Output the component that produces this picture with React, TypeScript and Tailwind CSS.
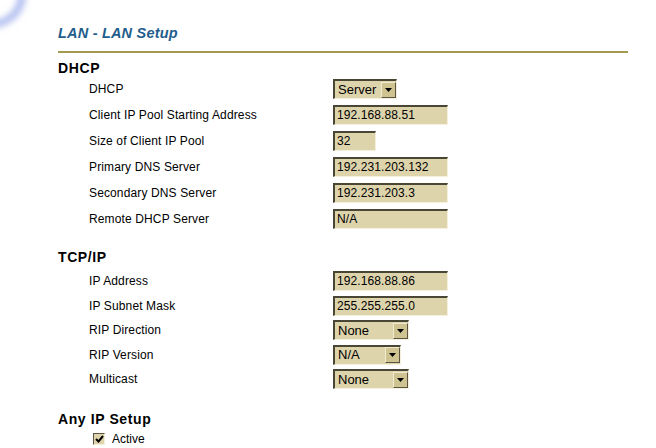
import React from "react";

const font = { fontFamily: '"Liberation Sans", Arial, sans-serif' };

function TextBox({ value, w }: { value: string; w: number }) {
  return (
    <div
      className="h-[20px] border-t-2 border-l-2 border-t-[#4a4636] border-l-[#4a4636] border-b border-r border-b-[#f4f0dc] border-r-[#f4f0dc] bg-[#ddd4ac] pl-[2px] text-[12px] leading-[17px] tracking-[0.1px] text-black"
      style={{ width: w }}
    >
      {value}
    </div>
  );
}

function Select({ value, w }: { value: string; w: number }) {
  return (
    <div
      className="flex h-[20px] items-center justify-between border-t-2 border-l-2 border-t-[#4a4636] border-l-[#4a4636] border-b border-r border-b-[#f4f0dc] border-r-[#f4f0dc] bg-[#ddd4ac] pl-[3px] text-[13px] leading-[16px] text-black"
      style={{ width: w }}
    >
      <span>{value}</span>
      <div className="flex h-[16px] w-[15px] items-center justify-center border-t border-l border-t-[#f0ead0] border-l-[#f0ead0] border-b border-r border-b-[#5a5440] border-r-[#5a5440] bg-[#cfc392]">
        <svg width="7" height="4" viewBox="0 0 7 4">
          <polygon points="0,0 7,0 3.5,4" fill="#000" />
        </svg>
      </div>
    </div>
  );
}

function Row({ label, h, children }: { label: string; h: string; children: React.ReactNode }) {
  return (
    <div className={`flex items-center ${h}`}>
      <div className="w-[275px] pl-[31px] text-[12px] tracking-[0.13px] text-black">{label}</div>
      {children}
    </div>
  );
}

function Header({ h, children }: { h: string; children: React.ReactNode }) {
  return (
    <div className={`flex items-end ${h} text-[14px] font-bold leading-[16px] tracking-[0.6px] text-black`}>
      {children}
    </div>
  );
}

export default function App() {
  return (
    <div className="relative h-[448px] w-[656px] overflow-hidden bg-white" style={font}>
      <svg className="absolute left-0 top-0" width="60" height="60" viewBox="0 0 60 60">
        <defs>
          <filter id="b" x="-50%" y="-50%" width="200%" height="200%">
            <feGaussianBlur stdDeviation="3" />
          </filter>
        </defs>
        <circle cx="-8" cy="-6" r="30" fill="none" stroke="#b4c0f0" strokeWidth="8" filter="url(#b)" />
      </svg>
      <div className="pl-[58px] pr-[28px]">
        <div className="flex h-[44px] items-end pb-[3px]">
          <span className="text-[14.5px] font-bold italic leading-[16px] tracking-[0.2px] text-[#1f5d8c]">LAN - LAN Setup</span>
        </div>
        <div className="mt-[7px] h-[2px] bg-[#a39a4e]" />
        <Header h="h-[23px]">DHCP</Header>
        <Row label="DHCP" h="h-[26px]"><Select value="Server" w={64} /></Row>
        <Row label="Client IP Pool Starting Address" h="h-[26px]"><TextBox value="192.168.88.51" w={115} /></Row>
        <Row label="Size of Client IP Pool" h="h-[26px]"><TextBox value="32" w={43} /></Row>
        <Row label="Primary DNS Server" h="h-[26px]"><TextBox value="192.231.203.132" w={115} /></Row>
        <Row label="Secondary DNS Server" h="h-[26px]"><TextBox value="192.231.203.3" w={115} /></Row>
        <Row label="Remote DHCP Server" h="h-[26px]"><TextBox value="N/A" w={115} /></Row>
        <Header h="h-[33px]">TCP/IP</Header>
        <div className="h-[4px]" />
        <Row label="IP Address" h="h-[24.5px]"><TextBox value="192.168.88.86" w={115} /></Row>
        <Row label="IP Subnet Mask" h="h-[24.5px]"><TextBox value="255.255.255.0" w={115} /></Row>
        <Row label="RIP Direction" h="h-[24.5px]"><Select value="None" w={76} /></Row>
        <Row label="RIP Version" h="h-[24.5px]"><Select value="N/A" w={68} /></Row>
        <Row label="Multicast" h="h-[24.5px]"><Select value="None" w={76} /></Row>
        <Header h="h-[35px]">Any IP Setup</Header>
        <div className="flex h-[24px] items-center pl-[35px]">
          <div className="flex h-[12px] w-[12px] items-center justify-center border-t border-l border-t-[#5a5440] border-l-[#5a5440] border-b border-r border-b-[#f4f0dc] border-r-[#f4f0dc] bg-[#ddd4ac]">
            <svg width="9" height="8" viewBox="0 0 9 8">
              <polyline points="1,4 3.5,6.5 8,1" fill="none" stroke="#000" strokeWidth="2" />
            </svg>
          </div>
          <span className="ml-[7px] text-[12px] text-black">Active</span>
        </div>
      </div>
    </div>
  );
}
